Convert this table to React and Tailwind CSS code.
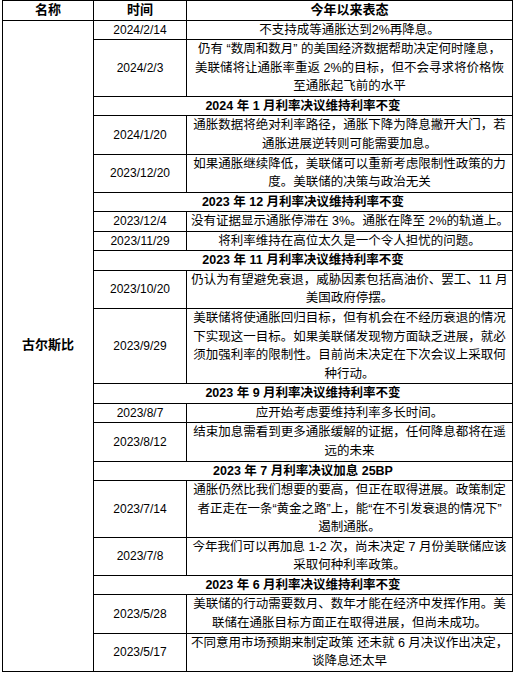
import React from "react";

const rows = [
  { date: "2024/2/14", lines: ["不支持成等通胀达到2%再降息。"] },
  {
    date: "2024/2/3",
    lines: ["仍有 “数周和数月” 的美国经济数据帮助决定何时隆息，", "美联储将让通胀率重返 2%的目标，但不会寻求将价格恢", "至通胀起飞前的水平"],
  },
  { section: "2024 年 1 月利率决议维持利率不变" },
  { date: "2024/1/20", lines: ["通胀数据将绝对利率路径，通胀下降为降息撇开大门，若", "通胀进展逆转则可能需要加息。"] },
  { date: "2023/12/20", lines: ["如果通胀继续降低，美联储可以重新考虑限制性政策的力", "度。美联储的决策与政治无关"] },
  { section: "2023 年 12 月利率决议维持利率不变" },
  { date: "2023/12/4", lines: ["没有证据显示通胀停滞在 3%。通胀在降至 2%的轨道上。"] },
  { date: "2023/11/29", lines: ["将利率维持在高位太久是一个令人担忧的问题。"] },
  { section: "2023 年 11 月利率决议维持利率不变" },
  { date: "2023/10/20", lines: ["仍认为有望避免衰退，威胁因素包括高油价、罢工、11 月", "美国政府停摆。"] },
  {
    date: "2023/9/29",
    lines: ["美联储将使通胀回归目标，但有机会在不经历衰退的情况", "下实现这一目标。如果美联储发现物方面缺乏进展，就必", "须加强利率的限制性。目前尚未决定在下次会议上采取何", "种行动。"],
  },
  { section: "2023 年 9 月利率决议维持利率不变" },
  { date: "2023/8/7", lines: ["应开始考虑要维持利率多长时间。"] },
  { date: "2023/8/12", lines: ["结束加息需看到更多通胀缓解的证据，任何降息都将在遥", "远的未来"] },
  { section: "2023 年 7 月利率决议加息 25BP" },
  {
    date: "2023/7/14",
    lines: ["通胀仍然比我们想要的要高，但正在取得进展。政策制定", "者正走在一条“黄金之路”上，能“在不引发衰退的情况下”", "遏制通胀。"],
  },
  { date: "2023/7/8", lines: ["今年我们可以再加息 1-2 次，尚未决定 7 月份美联储应该", "采取何种利率政策。"] },
  { section: "2023 年 6 月利率决议维持利率不变" },
  { date: "2023/5/28", lines: ["美联储的行动需要数月、数年才能在经济中发挥作用。美", "联储在通胀目标方面正在取得进展，但尚未成功。"] },
  { date: "2023/5/17", lines: ["不同意用市场预期来制定政策 还未就 6 月决议作出决定，", "谈降息还太早"] },
];

const cell = "border border-black text-center align-middle p-0 px-[4px]";

const App = () => {
  return (
    <div className="w-[515px] h-[675px] bg-white text-black font-['Liberation_Sans','Noto_Sans_CJK_SC',sans-serif] text-[12.5px] leading-[18.56px]">
      <table className="ml-[2px] w-[510px] border-collapse table-fixed">
        <colgroup>
          <col className="w-[91px]" />
          <col className="w-[93px]" />
          <col className="w-[326px]" />
        </colgroup>
        <thead>
          <tr>
            <th className={cell + " font-bold text-[13px]"}>名称</th>
            <th className={cell + " font-bold text-[13px]"}>时间</th>
            <th className={cell + " font-bold text-[13px]"}>今年以来表态</th>
          </tr>
        </thead>
        <tbody>
          {rows.map((r, i) => (
            <tr key={i}>
              {i === 0 && (
                <td rowSpan={rows.length} className={cell + " font-bold text-[13px]"}>
                  古尔斯比
                </td>
              )}
              {r.section ? (
                <td colSpan={2} className={cell + " font-bold"}>
                  {r.section}
                </td>
              ) : (
                <>
                  <td className={cell + " text-[12px]"}>{r.date}</td>
                  <td className={cell + " whitespace-nowrap"}>
                    {r.lines.map((l, j) => (
                      <div key={j}>{l}</div>
                    ))}
                  </td>
                </>
              )}
            </tr>
          ))}
        </tbody>
      </table>
    </div>
  );
};

export default App;
